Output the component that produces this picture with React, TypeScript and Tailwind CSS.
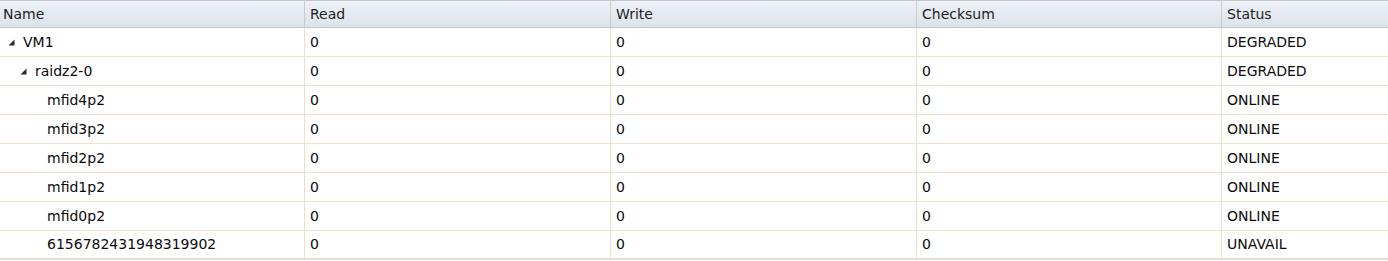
const rows = [
  { name: "VM1", level: 0, expanded: true, status: "DEGRADED" },
  { name: "raidz2-0", level: 1, expanded: true, status: "DEGRADED" },
  { name: "mfid4p2", level: 2, status: "ONLINE" },
  { name: "mfid3p2", level: 2, status: "ONLINE" },
  { name: "mfid2p2", level: 2, status: "ONLINE" },
  { name: "mfid1p2", level: 2, status: "ONLINE" },
  { name: "mfid0p2", level: 2, status: "ONLINE" },
  { name: "6156782431948319902", level: 2, status: "UNAVAIL" },
];

const cols = "grid grid-cols-[305px_306px_306px_305px_1fr]";

function Expander() {
  return (
    <svg width="12" height="12" viewBox="0 0 12 12" className="shrink-0">
      <path d="M3.5 9.5 L9.5 3.5 L9.5 9.5 Z" fill="#2a2a2a" />
    </svg>
  );
}

export default function App() {
  return (
    <div className="w-[1388px] h-[261px] overflow-hidden bg-white font-['DejaVu_Sans',sans-serif] text-[14px] text-[#0a0a0a]">
      <div className={`${cols} h-[28px] border-y border-[#c3c6cb] bg-gradient-to-b from-[#eef2f7] to-[#dbe3ec] text-[#1e1e1e]`}>
        {["Name", "Read", "Write", "Checksum", "Status"].map((h, i) => (
          <div key={h} className={`flex items-center ${i === 0 ? "pl-[3px]" : "pl-[5px]"} ${i < 4 ? "border-r border-[#c8cacd]" : ""}`}>
            {h}
          </div>
        ))}
      </div>
      {rows.map((r, idx) => (
        <div
          key={r.name}
          className={`${cols} h-[29px] ${idx === rows.length - 1 ? "border-b-2 border-[#ecdccb]" : "border-b border-[#f0e0d0]"}`}
        >
          <div className="flex items-center border-r border-[#f0dcc8]" style={{ paddingLeft: 5 + r.level * 12 }}>
            {r.expanded ? <Expander /> : <span className="w-[12px]" />}
            <span className="ml-[6px]">{r.name}</span>
          </div>
          <div className="flex items-center pl-[5px] border-r border-[#f0dcc8]">0</div>
          <div className="flex items-center pl-[5px] border-r border-[#f0dcc8]">0</div>
          <div className="flex items-center pl-[5px] border-r border-[#f0dcc8]">0</div>
          <div className="flex items-center pl-[5px]">{r.status}</div>
        </div>
      ))}
    </div>
  );
}
